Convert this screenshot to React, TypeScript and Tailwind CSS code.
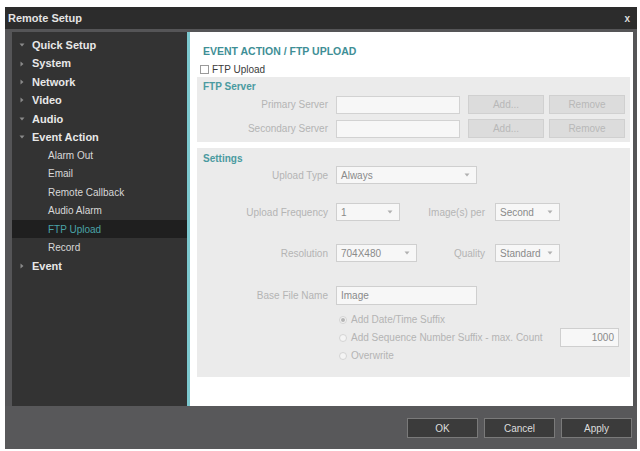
type NavItem = { label: string; level: 0 | 1; arrow?: 'down' | 'right'; active?: boolean };

const navItems: NavItem[] = [
  { label: 'Quick Setup', level: 0, arrow: 'down' },
  { label: 'System', level: 0, arrow: 'right' },
  { label: 'Network', level: 0, arrow: 'right' },
  { label: 'Video', level: 0, arrow: 'right' },
  { label: 'Audio', level: 0, arrow: 'down' },
  { label: 'Event Action', level: 0, arrow: 'down' },
  { label: 'Alarm Out', level: 1 },
  { label: 'Email', level: 1 },
  { label: 'Remote Callback', level: 1 },
  { label: 'Audio Alarm', level: 1 },
  { label: 'FTP Upload', level: 1, active: true },
  { label: 'Record', level: 1 },
  { label: 'Event', level: 0, arrow: 'right' },
];

function Arrow({ dir }: { dir: 'down' | 'right' }) {
  return (
    <svg width="6" height="6" viewBox="0 0 6 6" className="shrink-0">
      {dir === 'down' ? (
        <path d="M0.5 1.5 L5.5 1.5 L3 4.5 Z" fill="#8a8a8a" />
      ) : (
        <path d="M1.5 0.5 L4.5 3 L1.5 5.5 Z" fill="#8a8a8a" />
      )}
    </svg>
  );
}

function Select({ value, width }: { value: string; width: string }) {
  return (
    <div
      className={`${width} h-[18px] flex items-center justify-between bg-[#f7f7f7] border border-[#cfcfcf] pl-[4px] pr-[6px] text-[10px] text-[#8a8a8a]`}
    >
      <span>{value}</span>
      <svg width="6" height="4" viewBox="0 0 6 4">
        <path d="M0.5 0.5 L5.5 0.5 L3 3.5 Z" fill="#b0b0b0" />
      </svg>
    </div>
  );
}

function GrayButton({ label }: { label: string }) {
  return (
    <div className="w-[76px] h-[19px] flex items-center justify-center bg-[#dcdcdc] border border-[#d0d0d0] text-[10px] text-[#b8b8b8]">
      {label}
    </div>
  );
}

function Radio({ checked, label }: { checked?: boolean; label: string }) {
  return (
    <div className="h-[17px] flex items-center gap-[4px] pl-[3px]">
      <span className="w-[8px] h-[8px] rounded-full bg-[#f4f4f4] border border-[#d4d4d4] flex items-center justify-center">
        {checked && <span className="w-[4px] h-[4px] rounded-full bg-[#b5b5b5]" />}
      </span>
      <span className="text-[10px] text-[#b4b4b4]">{label}</span>
    </div>
  );
}

export default function App() {
  return (
    <div
      className="w-[640px] h-[451px] bg-white pt-[7px] pl-[5px] pr-[3px] pb-[2px]"
      style={{ fontFamily: '"Liberation Sans", Arial, sans-serif' }}
    >
      <div className="h-full flex flex-col bg-[#555557]">
        {/* title bar */}
        <div className="h-[22px] shrink-0 flex items-center justify-between bg-[#2c2c2c] pl-[3px] pr-[7px]">
          <span className="text-[11px] font-bold text-[#e4e4e4]">Remote Setup</span>
          <span className="text-[10px] font-bold text-[#dddddd]">x</span>
        </div>

        <div className="flex-1 flex pt-[3px] pl-[7px] pr-[4px]">
          {/* navigation */}
          <div className="w-[175px] h-[374px] bg-[#333333] pt-[4px]">
            {navItems.map((item) => (
              <div
                key={item.label}
                className={`h-[18.4px] flex items-center ${item.active ? 'bg-[#1f1f1f]' : ''} ${
                  item.level === 0 ? 'pl-[7px] gap-[7px]' : 'pl-[36px]'
                }`}
              >
                {item.arrow && <Arrow dir={item.arrow} />}
                <span
                  className={
                    item.level === 0
                      ? 'text-[11px] font-bold text-[#e8e8e8]'
                      : `text-[10px] ${item.active ? 'text-[#4aa3a8]' : 'text-[#d8d8d8]'}`
                  }
                >
                  {item.label}
                </span>
              </div>
            ))}
          </div>

          {/* content */}
          <div className="flex-1 h-[374px] bg-white border-l-[3px] border-[#7cc8cf] pl-[7px] pr-[3px] pt-[12px]">
            <div className="pl-[6px] text-[10.5px] font-bold text-[#3f8f96] leading-[14px]">
              EVENT ACTION / FTP UPLOAD
            </div>
            <div className="flex items-center gap-[3px] pl-[3px] mt-[4px] h-[14px]">
              <span className="w-[9px] h-[9px] bg-white border border-[#9a9a9a]" />
              <span className="text-[10px] text-[#3a3a3a]">FTP Upload</span>
            </div>

            {/* FTP server group */}
            <div className="mt-[1px] h-[65px] bg-[#ebebeb] pt-[3px]">
              <div className="pl-[6px] text-[10px] font-bold text-[#4a9aa0] leading-[13px]">FTP Server</div>
              <div className="flex items-center mt-[2px] h-[19px]">
                <span className="w-[131px] text-right text-[10px] text-[#b4b4b4]">Primary Server</span>
                <div className="ml-[8px] w-[124px] h-[18px] bg-[#f7f7f7] border border-[#d2d2d2]" />
                <div className="ml-[8px] flex gap-[5px]">
                  <GrayButton label="Add..." />
                  <GrayButton label="Remove" />
                </div>
              </div>
              <div className="flex items-center mt-[5px] h-[19px]">
                <span className="w-[131px] text-right text-[10px] text-[#b4b4b4]">Secondary Server</span>
                <div className="ml-[8px] w-[124px] h-[18px] bg-[#f7f7f7] border border-[#d2d2d2]" />
                <div className="ml-[8px] flex gap-[5px]">
                  <GrayButton label="Add..." />
                  <GrayButton label="Remove" />
                </div>
              </div>
            </div>

            {/* settings group */}
            <div className="mt-[6px] h-[229px] bg-[#ebebeb] pt-[4px]">
              <div className="pl-[6px] text-[10px] font-bold text-[#4a9aa0] leading-[13px]">Settings</div>

              <div className="flex items-center mt-[1px] h-[18px]">
                <span className="w-[131px] text-right text-[10px] text-[#b4b4b4]">Upload Type</span>
                <div className="ml-[8px]">
                  <Select value="Always" width="w-[141px]" />
                </div>
              </div>

              <div className="flex items-center mt-[19px] h-[18px]">
                <span className="w-[131px] text-right text-[10px] text-[#b4b4b4]">Upload Frequency</span>
                <div className="ml-[8px]">
                  <Select value="1" width="w-[64px]" />
                </div>
                <span className="w-[85px] text-right text-[10px] text-[#b4b4b4]">Image(s) per</span>
                <div className="ml-[10px]">
                  <Select value="Second" width="w-[65px]" />
                </div>
              </div>

              <div className="flex items-center mt-[23px] h-[18px]">
                <span className="w-[131px] text-right text-[10px] text-[#b4b4b4]">Resolution</span>
                <div className="ml-[8px]">
                  <Select value="704X480" width="w-[81px]" />
                </div>
                <span className="w-[68px] text-right text-[10px] text-[#b4b4b4]">Quality</span>
                <div className="ml-[10px]">
                  <Select value="Standard" width="w-[65px]" />
                </div>
              </div>

              <div className="flex items-center mt-[24px] h-[19px]">
                <span className="w-[131px] text-right text-[10px] text-[#b4b4b4]">Base File Name</span>
                <div className="ml-[8px] w-[141px] h-[19px] flex items-center bg-[#f7f7f7] border border-[#cfcfcf] pl-[4px] text-[10px] text-[#8a8a8a]">
                  Image
                </div>
              </div>

              <div className="ml-[139px] mt-[6px] flex flex-col">
                <Radio checked label="Add Date/Time Suffix" />
                <div className="flex items-center">
                  <Radio label="Add Sequence Number Suffix - max. Count" />
                  <div className="ml-auto mr-[11px] w-[59px] h-[19px] flex items-center justify-end bg-[#f7f7f7] border border-[#cfcfcf] pr-[4px] text-[10px] text-[#8a8a8a]">
                    1000
                  </div>
                </div>
                <Radio label="Overwrite" />
              </div>
            </div>
          </div>
        </div>

        {/* footer */}
        <div className="h-[43px] shrink-0 flex justify-end gap-[6px] pt-[12px] pr-[5px] bg-[#58585a]">
          {['OK', 'Cancel', 'Apply'].map((b) => (
            <div
              key={b}
              className="w-[71px] h-[20px] flex items-center justify-center bg-[#3b3b3b] border border-[#7a7a7a] text-[10px] text-[#dddddd]"
            >
              {b}
            </div>
          ))}
        </div>
      </div>
    </div>
  );
}
